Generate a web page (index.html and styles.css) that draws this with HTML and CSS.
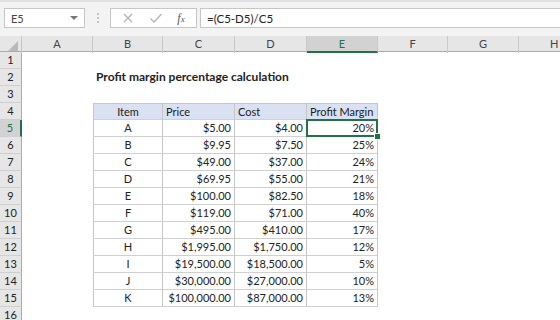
FILE: index.html
```html
<!DOCTYPE html>
<html lang="en">
<head>
  <meta charset="UTF-8">
  <title>Profit margin percentage calculation</title>
  <link rel="stylesheet" href="styles.css">
</head>
<body>

  <!-- Formula bar -->
  <div class="toolbar">
    <div class="namebox">
      <span>E5</span>
      <span class="arrow"></span>
    </div>
    <div class="grip"><i></i><i></i><i></i></div>
    <div class="buttons">
      <svg class="btn" width="12" height="12" viewBox="0 0 12 12"><path d="M2 2 L10 10 M10 2 L2 10" stroke="#b4b4b4" stroke-width="1.3" fill="none"/></svg>
      <svg class="btn" width="14" height="12" viewBox="0 0 14 12"><path d="M1.5 6.5 L5 10 L12.5 2" stroke="#b4b4b4" stroke-width="1.3" fill="none"/></svg>
      <span class="fx">f<small>x</small></span>
    </div>
    <div class="formula">=(C5-D5)/C5</div>
  </div>

  <!-- Sheet -->
  <div class="sheet">
    <div class="row head">
      <div class="corner"><span></span></div>
      <div class="ch">A</div><div class="ch">B</div><div class="ch">C</div><div class="ch">D</div>
      <div class="ch active">E</div><div class="ch">F</div><div class="ch">G</div><div class="ch last">H</div>
    </div>

    <div class="row"><div class="rh">1</div></div>
    <div class="row"><div class="rh">2</div><div class="c"></div><div class="c title">Profit margin percentage calculation</div></div>
    <div class="row"><div class="rh">3</div></div>
    <div class="row">
      <div class="rh">4</div><div class="c"></div>
      <div class="c t th first center">Item</div><div class="c t th">Price</div><div class="c t th">Cost</div><div class="c t th">Profit Margin</div>
    </div>
    <div class="row">
      <div class="rh active">5</div><div class="c"></div>
      <div class="c t first center">A</div><div class="c t num">$5.00</div><div class="c t num">$4.00</div><div class="c t num sel">20%</div>
    </div>
    <div class="row">
      <div class="rh">6</div><div class="c"></div>
      <div class="c t first center">B</div><div class="c t num">$9.95</div><div class="c t num">$7.50</div><div class="c t num">25%</div>
    </div>
    <div class="row">
      <div class="rh">7</div><div class="c"></div>
      <div class="c t first center">C</div><div class="c t num">$49.00</div><div class="c t num">$37.00</div><div class="c t num">24%</div>
    </div>
    <div class="row">
      <div class="rh">8</div><div class="c"></div>
      <div class="c t first center">D</div><div class="c t num">$69.95</div><div class="c t num">$55.00</div><div class="c t num">21%</div>
    </div>
    <div class="row">
      <div class="rh">9</div><div class="c"></div>
      <div class="c t first center">E</div><div class="c t num">$100.00</div><div class="c t num">$82.50</div><div class="c t num">18%</div>
    </div>
    <div class="row">
      <div class="rh">10</div><div class="c"></div>
      <div class="c t first center">F</div><div class="c t num">$119.00</div><div class="c t num">$71.00</div><div class="c t num">40%</div>
    </div>
    <div class="row">
      <div class="rh">11</div><div class="c"></div>
      <div class="c t first center">G</div><div class="c t num">$495.00</div><div class="c t num">$410.00</div><div class="c t num">17%</div>
    </div>
    <div class="row">
      <div class="rh">12</div><div class="c"></div>
      <div class="c t first center">H</div><div class="c t num">$1,995.00</div><div class="c t num">$1,750.00</div><div class="c t num">12%</div>
    </div>
    <div class="row">
      <div class="rh">13</div><div class="c"></div>
      <div class="c t first center">I</div><div class="c t num">$19,500.00</div><div class="c t num">$18,500.00</div><div class="c t num">5%</div>
    </div>
    <div class="row">
      <div class="rh">14</div><div class="c"></div>
      <div class="c t first center">J</div><div class="c t num">$30,000.00</div><div class="c t num">$27,000.00</div><div class="c t num">10%</div>
    </div>
    <div class="row">
      <div class="rh">15</div><div class="c"></div>
      <div class="c t first center">K</div><div class="c t num">$100,000.00</div><div class="c t num">$87,000.00</div><div class="c t num">13%</div>
    </div>
    <div class="row"><div class="rh">16</div></div>
  </div>

</body>
</html>
```

FILE: styles.css
```css
body {
  margin: 0;
  width: 560px;
  height: 320px;
  overflow: hidden;
  background: #fff;
  font-family: Lato, "Liberation Sans", sans-serif;
  font-size: 11px;
  color: #222;
}

/* formula bar */
.toolbar {
  display: flex;
  align-items: center;
  height: 36px;
  box-sizing: border-box;
  padding: 0 0 2px 4px;
  background: #f3f3f3;
  border-top: 2px solid #e0e0e0;
}
.namebox, .buttons, .formula {
  height: 20px;
  box-sizing: border-box;
  background: #fff;
  border: 1px solid #c6c6c6;
  display: flex;
  align-items: center;
}
.namebox {
  width: 81px;
  padding: 0 6px;
  justify-content: space-between;
  color: #444;
}
.arrow {
  width: 0;
  height: 0;
  border-left: 4px solid transparent;
  border-right: 4px solid transparent;
  border-top: 4px solid #777;
}
.grip {
  width: 25px;
  display: flex;
  flex-direction: column;
  align-items: center;
  gap: 2px;
}
.grip i {
  width: 2px;
  height: 2px;
  background: #c4c4c4;
}
.buttons {
  width: 87px;
  margin-right: 3px;
  justify-content: space-around;
  padding: 0 4px;
}
.fx {
  font-family: "Liberation Serif", serif;
  font-style: italic;
  font-size: 12px;
  color: #555;
}
.fx small {
  font-size: 9px;
}
.formula {
  flex: 1;
  padding: 0 6px;
  border-right: none;
  color: #222;
  font-size: 11.5px;
}

/* sheet grid */
.sheet {
  width: 560px;
  overflow: hidden;
}
.row {
  display: grid;
  grid-template-columns: 22px 71px 70px 72px 72px 71px 70px 71px 41px;
  height: 17px;
}
.row.head {
  height: 16px;
  background: #e6e6e6;
  border-bottom: 1px solid #ababab;
  box-sizing: border-box;
}
.corner {
  position: relative;
  border-right: 1px solid #c6c6c6;
}
.corner span {
  position: absolute;
  right: 3px;
  bottom: 2px;
  width: 0;
  height: 0;
  border-left: 10px solid transparent;
  border-bottom: 10px solid #b9b9b9;
}
.ch {
  text-align: center;
  line-height: 15px;
  color: #444;
  border-right: 1px solid #c9c9c9;
}
.ch.last {
  text-align: left;
  padding-left: 31px;
  border-right: none;
}
.ch.active {
  background: #d2d2d2;
  color: #217346;
  border-bottom: 2px solid #217346;
}
.rh {
  background: #e6e6e6;
  border-right: 1px solid #ababab;
  border-bottom: 1px solid #cfcfcf;
  box-sizing: border-box;
  text-align: center;
  line-height: 16px;
  color: #222;
}
.rh.active {
  background: #d2d2d2;
  color: #217346;
  border-right: 2px solid #217346;
}

.c {
  box-sizing: border-box;
  padding: 0 3px;
  line-height: 16px;
  white-space: nowrap;
}
.title {
  font-weight: bold;
  font-size: 12px;
  overflow: visible;
}
.t {
  border-right: 1px solid #c6c6c6;
  border-bottom: 1px solid #d0d0d0;
}
.t.first {
  border-left: 1px solid #c6c6c6;
}
.th {
  background: #d9e1f2;
  border-top: 1px solid #c6c6c6;
  line-height: 15px;
}
.center {
  text-align: center;
}
.num {
  text-align: right;
}

/* active cell */
.sel {
  position: relative;
}
.sel::after {
  content: "";
  position: absolute;
  left: -1px;
  top: -1px;
  right: -1px;
  bottom: -1px;
  border: 2px solid #217346;
}
.sel::before {
  content: "";
  position: absolute;
  right: -4px;
  bottom: -4px;
  width: 5px;
  height: 5px;
  background: #217346;
  border: 1px solid #fff;
  z-index: 1;
}
```
